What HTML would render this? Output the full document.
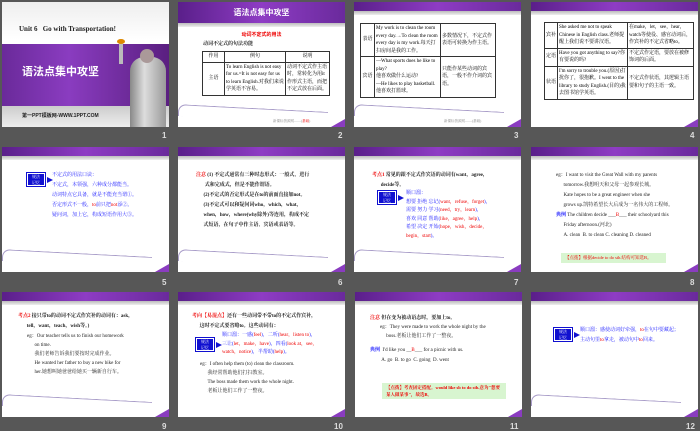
<!DOCTYPE html>
<html><head><meta charset="utf-8"><style>
*{margin:0;padding:0;box-sizing:border-box}
body{width:700px;height:431px;background:#575757;position:relative;overflow:hidden;font-family:"Liberation Serif","Noto Serif CJK SC","Noto Sans CJK SC",serif}
.s{position:absolute;width:167px;height:125px;background:#fff;overflow:hidden}
.hd{position:absolute;left:0;top:0;width:100%;height:9px;background:linear-gradient(90deg,#5a1f8a,#8e3cc4 50%,#6a2a9c);}
.hd:after{content:"";position:absolute;left:0;top:9px;width:100%;height:4px;background:linear-gradient(#bbb,#eee)}
.ln{position:absolute;left:0;top:106px;width:150px;height:12px;border-top:1px solid #a89cc8;border-left:1px solid #a89cc8;border-radius:8px 0 0 0;transform:skewY(3deg)}
.num{position:absolute;color:#ddd;font:bold 8px "Liberation Sans",sans-serif}
.t{position:absolute;font-size:5px;line-height:9.5px;color:#222}
.b{color:#1a1aff}.r{color:#e00}
.tag{position:absolute;width:18px;height:13px;background:#1010d0;color:#fff;font-size:4px;line-height:6px;text-align:center;border:1px solid #fff;outline:1px solid #1010d0}
.tag:after{content:"";position:absolute;right:-9px;top:3px;border-left:6px solid #1010d0;border-top:3px solid transparent;border-bottom:3px solid transparent}
table{position:absolute;border-collapse:collapse;font-size:5px;line-height:7.5px}
td{border:1px solid #333;padding:1px;vertical-align:middle}
.note{position:absolute;background:#d8f5d0;color:#e00;font-size:4.5px;line-height:8px;padding:1px 4px}
.cr{position:absolute;right:0;bottom:0;width:14px;height:8px;background:#8a3cc0;clip-path:polygon(100% 0,100% 100%,0 100%)}
</style></head><body>

<div class="s" style="left:2px;top:2px;background:linear-gradient(#eee,#fff 30%)">
 <div style="position:absolute;left:17px;top:23px;font:bold 7px 'Liberation Serif',serif;color:#222">Unit 6 &nbsp; Go with Transportation!</div>
 <div style="position:absolute;left:0;top:42px;width:167px;height:62px;background:linear-gradient(90deg,#6a2a9a,#8a3cc0 40%,#5a1f80)"></div>
 <div style="position:absolute;left:20px;top:61px;color:#fff;font:bold 11px 'Noto Sans CJK SC',sans-serif">语法点集中攻坚</div>
 <div style="position:absolute;left:0;top:104px;width:167px;height:21px;background:linear-gradient(#ccc,#eee)"></div>
 <div style="position:absolute;left:20px;top:110px;font:bold 5px 'Liberation Sans','Noto Sans CJK SC',sans-serif;color:#222">第一PPT模板网-WWW.1PPT.COM</div>
 <div style="position:absolute;left:128px;top:55px;width:36px;height:70px;background:linear-gradient(90deg,#888,#ddd 40%,#999);border-radius:14px 14px 0 0"></div>
 <div style="position:absolute;left:138px;top:47px;width:14px;height:14px;border-radius:50%;background:#a99"></div>
 <div style="position:absolute;left:117px;top:40px;width:4px;height:22px;background:#bbb"></div>
 <div style="position:absolute;left:115px;top:37px;width:8px;height:5px;background:#d80;border-radius:50%"></div>
</div>
<div class="num" style="left:162px;top:131px">1</div>

<div class="s" style="left:178px;top:2px">
 <div style="position:absolute;left:0;top:0;width:100%;height:21px;background:linear-gradient(90deg,#5a1f8a,#8e3cc4 50%,#6a2a9c)"></div>
 <div style="position:absolute;left:0;top:21px;width:100%;height:4px;background:linear-gradient(#bbb,#eee)"></div>
 <div style="position:absolute;width:100%;top:5px;text-align:center;color:#fff;font:bold 8px 'Noto Sans CJK SC',sans-serif">语法点集中攻坚</div>
 <div style="position:absolute;width:100%;top:29px;text-align:center;color:#e00;font:bold 5px 'Noto Sans CJK SC',sans-serif">动词不定式的用法</div>
 <div class="t" style="left:25px;top:38px;font-weight:bold">动词不定式的句法功能</div>
 <table style="left:24px;top:49px;width:128px"><tr><td style="width:22px;text-align:center">作用</td><td style="text-align:center">例句</td><td style="width:44px;text-align:center">说明</td></tr>
 <tr><td style="text-align:center">主语</td><td>To learn English is not easy for us.=It is not easy for us to learn English.对我们来说学英语不容易。</td><td>动词不定式作主语时，常转化为用it作形式主语，而把不定式放在后面。</td></tr></table>
 <div class="ln"></div><div class="cr"></div>
 <div class="t" style="left:95px;top:115px;font-size:3.5px;color:#888">新课标资源网——(<span class="r">基础</span>)</div>
</div>
<div class="num" style="left:338px;top:131px">2</div>

<div class="s" style="left:354px;top:2px">
 <div class="hd"></div>
 <table style="left:6px;top:21px;width:136px"><tr><td style="width:14px;text-align:center">表语</td><td style="width:66px">My work is to clean the room every day.→To clean the room every day is my work.每天打扫房间是我的工作。</td><td>多数情况下，不定式作表语可转换为作主语。</td></tr>
 <tr><td style="text-align:center">宾语</td><td>—What sports does he like to play?<br>他喜欢做什么运动?<br>—He likes to play basketball.<br>他喜欢打篮球。</td><td>只能作某些动词的宾语，一般不作介词的宾语。</td></tr></table>
 <div class="ln"></div><div class="cr"></div>
 <div class="t" style="left:90px;top:115px;font-size:3.5px;color:#888">新课标资源网——(基础)</div>
</div>
<div class="num" style="left:514px;top:131px">3</div>

<div class="s" style="left:531px;top:2px">
 <div class="hd"></div>
 <table style="left:13px;top:20px;width:150px"><tr><td style="width:13px;text-align:center">宾补</td><td style="width:70px">She asked me not to speak Chinese in English class.老师提醒上我们说不要讲汉语。</td><td>在make，let，see，hear，watch等使役、感官动词后，作宾补的不定式省略to。</td></tr>
 <tr><td style="text-align:center">定语</td><td>Have you got anything to say?你有要说的吗?</td><td>不定式作定语，要放在被修饰词的后面。</td></tr>
 <tr><td style="text-align:center">状语</td><td>I'm sorry to trouble you.(原因)打扰你了，很抱歉。I went to the library to study English.(目的)我去图书馆学英语。</td><td>不定式作状语，其逻辑主语要和句子的主语一致。</td></tr></table>
 <div class="cr"></div>
</div>
<div class="num" style="left:690px;top:131px">4</div>

<div class="s" style="left:2px;top:147px">
 <div class="hd"></div>
 <div class="tag" style="left:25px;top:26px">规法<br>记忆</div>
 <div class="t b" style="left:50px;top:24px;line-height:10px">不定式的用法口诀：<br>不定式，本领强，六种成分都能当。<br>动词特点它具备，就是不能充当谓①。<br>否定形式不一般，<span class="r">to</span>前只把<span class="r">not</span>添②。<br>疑问词，加上它，构成短语作用大③。</div>
 <div class="ln"></div><div class="cr"></div>
</div>
<div class="num" style="left:162px;top:278px">5</div>

<div class="s" style="left:178px;top:147px">
 <div class="hd"></div>
 <div class="t" style="left:18px;top:24px;font-weight:bold;line-height:10px"><span class="r">注意</span> (1) 不定式通常有三种时态形式：一般式、进行<br>&nbsp;&nbsp;&nbsp;&nbsp;&nbsp;&nbsp;&nbsp;式和完成式，但是不能作谓语。<br>&nbsp;&nbsp;&nbsp;&nbsp;&nbsp;&nbsp;(2)不定式的否定形式是在to的前面直接加not。<br>&nbsp;&nbsp;&nbsp;&nbsp;&nbsp;&nbsp;(3)不定式可以和疑问词who，which，what，<br>&nbsp;&nbsp;&nbsp;&nbsp;&nbsp;&nbsp;when，how，where(why除外)等连用，构成不定<br>&nbsp;&nbsp;&nbsp;&nbsp;&nbsp;&nbsp;式短语，在句子中作主语、宾语或表语等。</div>
 <div class="ln"></div><div class="cr"></div>
</div>
<div class="num" style="left:338px;top:278px">6</div>

<div class="s" style="left:354px;top:147px">
 <div class="hd"></div>
 <div class="t" style="left:18px;top:24px;font-weight:bold"><span class="r">考点1</span> 常见的跟不定式作宾语的动词有want，agree，<br>&nbsp;&nbsp;&nbsp;&nbsp;&nbsp;&nbsp;&nbsp;decide等。</div>
 <div class="tag" style="left:24px;top:44px">规法<br>记忆</div>
 <div class="t b" style="left:52px;top:43px;line-height:8.5px">顺口溜：<br>想要 拒绝 忘记(<span class="r">want，refuse，forget</span>)，<br>需要 努力 学习(<span class="r">need，try，learn</span>)，<br>喜欢 同意 帮助(<span class="r">like，agree，help</span>)，<br>希望 决定 开始(<span class="r">hope，wish，decide，<br>begin，start</span>)。</div>
 <div class="ln"></div><div class="cr"></div>
</div>
<div class="num" style="left:514px;top:278px">7</div>

<div class="s" style="left:531px;top:147px">
 <div class="hd"></div>
 <div class="t" style="left:25px;top:24px;line-height:10px">eg：I want to visit the Great Wall with my parents<br>&nbsp;&nbsp;&nbsp;&nbsp;&nbsp;&nbsp;tomorrow.我想明天和父母一起参观长城。<br>&nbsp;&nbsp;&nbsp;&nbsp;&nbsp;&nbsp;Kate hopes to be a great engineer when she<br>&nbsp;&nbsp;&nbsp;&nbsp;&nbsp;&nbsp;grows up.凯特希望长大后成为一名伟大的工程师。<br><b class="b">典例</b> The children decide ___<span class="r">B</span>___ their schoolyard this<br>&nbsp;&nbsp;&nbsp;&nbsp;&nbsp;&nbsp;Friday afternoon.(河北)<br>&nbsp;&nbsp;&nbsp;&nbsp;&nbsp;&nbsp;A. clean &nbsp;B. to clean C. cleaning D. cleaned</div>
 <div class="note" style="left:30px;top:106px;width:105px">【点拨】根据decide to do sth.结构可知选B。</div>
 <div class="cr"></div>
</div>
<div class="num" style="left:690px;top:278px">8</div>

<div class="s" style="left:2px;top:292px">
 <div class="hd"></div>
 <div class="t" style="left:16px;top:20px;font-weight:bold"><span class="r">考点2</span> 接只带to的动词不定式作宾补的动词有：ask，<br>&nbsp;&nbsp;&nbsp;&nbsp;&nbsp;&nbsp;&nbsp;tell，want，teach，wish等。)</div>
 <div class="t" style="left:25px;top:40px;line-height:9px">eg：Our teacher tells us to finish our homework<br>&nbsp;&nbsp;&nbsp;&nbsp;&nbsp;&nbsp;on time.<br>&nbsp;&nbsp;&nbsp;&nbsp;&nbsp;&nbsp;我们老师告诉我们要按时完成作业。<br>&nbsp;&nbsp;&nbsp;&nbsp;&nbsp;&nbsp;He wanted her father to buy a new bike for<br>&nbsp;&nbsp;&nbsp;&nbsp;&nbsp;&nbsp;her.她想叫她爸爸给她买一辆新自行车。</div>
 <div class="ln"></div><div class="cr"></div>
</div>
<div class="num" style="left:162px;top:422px">9</div>

<div class="s" style="left:178px;top:292px">
 <div class="hd"></div>
 <div class="t" style="left:14px;top:20px;font-weight:bold"><span class="r">考向【易混点】</span>还有一些动词带不带to的不定式作宾补，<br>&nbsp;&nbsp;&nbsp;&nbsp;&nbsp;&nbsp;这时不定式要省略to。这些动词有：</div>
 <div class="tag" style="left:18px;top:46px">规法<br>记忆</div>
 <div class="t b" style="left:44px;top:40px;line-height:8.5px">顺口溜：一感(<span class="r">feel</span>)，二听(<span class="r">hear，listen to</span>)，<br>三让(<span class="r">let，make，have</span>)，四看(<span class="r">look at，see，<br>watch，notice</span>)，半帮助(<span class="r">help</span>)。</div>
 <div class="t" style="left:22px;top:68px;line-height:9px">eg：I often help them (to) clean the classroom.<br>&nbsp;&nbsp;&nbsp;&nbsp;&nbsp;&nbsp;我经常帮助他们打扫教室。<br>&nbsp;&nbsp;&nbsp;&nbsp;&nbsp;&nbsp;The boss made them work the whole night.<br>&nbsp;&nbsp;&nbsp;&nbsp;&nbsp;&nbsp;老板让他们工作了一整夜。</div>
 <div class="cr"></div>
</div>
<div class="num" style="left:334px;top:422px">10</div>

<div class="s" style="left:355px;top:292px">
 <div class="hd"></div>
 <div class="t" style="left:15px;top:22px;line-height:9px"><b><span class="r">注意</span> 但在变为被动语态时，要加上to。</b><br>&nbsp;&nbsp;&nbsp;&nbsp;&nbsp;&nbsp;&nbsp;&nbsp;eg：They were made to work the whole night by the<br>&nbsp;&nbsp;&nbsp;&nbsp;&nbsp;&nbsp;&nbsp;&nbsp;&nbsp;&nbsp;&nbsp;&nbsp;&nbsp;boss.老板让他们工作了一整夜。</div>
 <div class="t" style="left:15px;top:54px;line-height:10px"><b class="b">典例</b> &nbsp;I'd like you __<span class="r">B</span>___ for a picnic with us.<br>&nbsp;&nbsp;&nbsp;&nbsp;&nbsp;&nbsp;&nbsp;&nbsp;&nbsp;A. go &nbsp;B. to go &nbsp;C. going &nbsp;D. went</div>
 <div class="note" style="left:27px;top:91px;width:124px;height:16px;font-weight:bold;line-height:7px">【点拨】考查固定搭配。would like sb to do sth.意为"想要某人做某事"，故选B。</div>
 <div class="cr"></div>
</div>
<div class="num" style="left:510px;top:422px">11</div>

<div class="s" style="left:531px;top:292px">
 <div class="hd"></div>
 <div class="tag" style="left:23px;top:36px">规法<br>记忆</div>
 <div class="t b" style="left:49px;top:34px;line-height:10px">顺口溜：感使动词好牵强，<span class="r">to</span>在句中要藏起；<br>主动句里<span class="r">to</span>拿走，被动句中<span class="r">to</span>回来。</div>
 <div class="ln"></div><div class="cr"></div>
</div>
<div class="num" style="left:686px;top:422px">12</div>

</body></html>
